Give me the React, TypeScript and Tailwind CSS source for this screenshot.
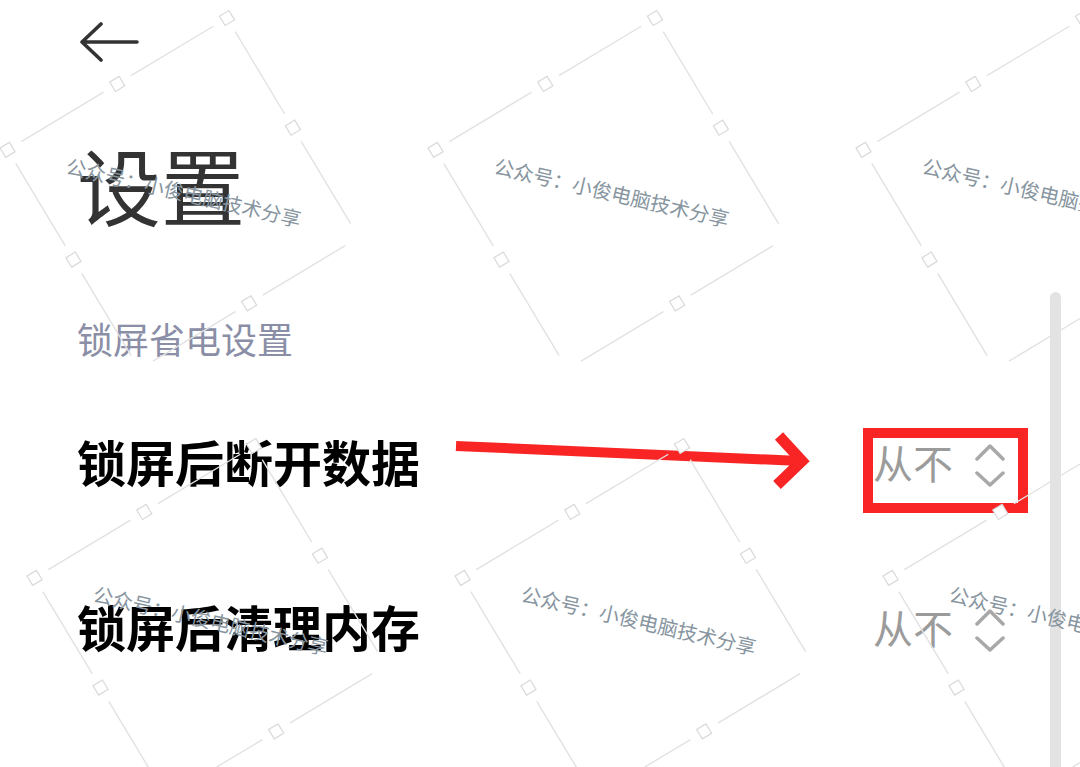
import React from 'react';

// Diagonal watermark tile: a tilted square frame with small marker boxes,
// plus the account line written across it.
const SIDE = 256;
const ANGLE = 31;
const RAD = (ANGLE * Math.PI) / 180;
const TOP = { x: 227, y: 18 };
const GAP = 16;

const alongLeft = { x: -Math.cos(RAD), y: Math.sin(RAD) };
const alongRight = { x: Math.sin(RAD), y: Math.cos(RAD) };

const pt = (base: { x: number; y: number }, dir: { x: number; y: number }, d: number) => ({
  x: base.x + dir.x * d,
  y: base.y + dir.y * d,
});

const corner = {
  top: TOP,
  left: pt(TOP, alongLeft, SIDE),
  right: pt(TOP, alongRight, SIDE),
};
const bottom = pt(corner.left, alongRight, SIDE);

const edges = [
  [corner.top, corner.left],
  [corner.top, corner.right],
  [corner.left, bottom],
  [corner.right, bottom],
];

const markers = [
  corner.top,
  corner.left,
  pt(corner.top, alongLeft, SIDE / 2),
  pt(corner.top, alongRight, SIDE / 2),
  pt(corner.left, alongRight, SIDE / 2),
  pt(corner.right, alongLeft, SIDE / 2),
];

const half = SIDE / 2;
const dash = `0 ${GAP} ${half - 2 * GAP} ${2 * GAP} ${half - 2 * GAP} ${GAP}`;

const tiles: { x: number; y: number }[] = [];
for (let r = 0; r < 2; r++) {
  for (let c = 0; c < 3; c++) {
    tiles.push({ x: c * 428 + r * 27, y: r * 428 });
  }
}

function Watermark() {
  return (
    <svg className="pointer-events-none absolute left-0 top-0" width={1080} height={767} viewBox="0 0 1080 767">
      {tiles.map((t, i) => (
        <g key={i} transform={`translate(${t.x} ${t.y})`}>
          {edges.map(([a, b], j) => (
            <line
              key={j}
              x1={a.x}
              y1={a.y}
              x2={b.x}
              y2={b.y}
              stroke="#e2e2e2"
              strokeWidth={1.4}
              strokeDasharray={dash}
            />
          ))}
          {markers.map((m, j) => (
            <rect
              key={j}
              x={m.x - 5.5}
              y={m.y - 5.5}
              width={11}
              height={11}
              fill="#ffffff"
              stroke="#d9d9d9"
              strokeWidth={1.2}
              transform={`rotate(${-ANGLE} ${m.x} ${m.y})`}
            />
          ))}
          <text
            transform="translate(67 165) rotate(13)"
            x={0}
            y={0}
            dominantBaseline="central"
            fontSize={20}
            fill="#8795a0"
            fontFamily="'Noto Sans CJK SC', sans-serif"
          >
            公众号：小俊电脑技术分享
          </text>
        </g>
      ))}
    </svg>
  );
}

function UpDown() {
  return (
    <svg className="translate-y-[4px]" width={30} height={44} viewBox="0 0 30 44" fill="none" stroke="#a8a8a8" strokeWidth={3.5} strokeLinecap="round" strokeLinejoin="round">
      <polyline points="2 16 15 3 28 16" />
      <polyline points="2 30 15 42 28 30" />
    </svg>
  );
}

function SettingRow({ label, value }: { label: string; value: string }) {
  return (
    <div className="flex h-[165px] items-center justify-between pr-[75px]">
      <span className="text-[49px] leading-[56px] font-bold text-black">{label}</span>
      <div className="flex items-center gap-[22px]">
        <span className="translate-y-[1px] text-[40px] leading-[48px] text-[#9b9b9b]">{value}</span>
        <UpDown />
      </div>
    </div>
  );
}

export default function App() {
  return (
    <div className="relative h-[767px] w-[1080px] overflow-hidden bg-white font-['Noto_Sans_CJK_SC','Noto_Sans',sans-serif]">
      <div className="pl-[77px]">
        <div className="h-[100px] pt-[22px] pl-[3px]">
          <svg width={60} height={40} viewBox="0 0 60 40" fill="none" stroke="#333333" strokeWidth={3.6} strokeLinecap="round" strokeLinejoin="round">
            <path d="M2 20H57M21 2L2 20L21 38" />
          </svg>
        </div>
        <h1 className="mt-[42px] text-[84px] leading-[84px] font-normal text-[#333333]">设置</h1>
        <div className="mt-[92px] text-[36px] leading-[40px] text-[#8a8ea6]">锁屏省电设置</div>
        <div className="mt-[20px]">
          <SettingRow label="锁屏后断开数据" value="从不" />
          <SettingRow label="锁屏后清理内存" value="从不" />
        </div>
      </div>

      {/* scroll indicator */}
      <div className="absolute left-[1050px] top-[292px] bottom-0 w-[11px] rounded-t-full bg-[#e3e3e3]" />

      {/* red annotation */}
      <svg className="absolute left-[440px] top-[420px]" width={380} height={80} viewBox="0 0 380 80" fill="none" stroke="#f92424">
        <line x1={16} y1={26} x2={360} y2={41} strokeWidth={10} />
        <polyline points="339 16 362 41 337 65" strokeWidth={11} strokeLinejoin="miter" />
      </svg>
      <div className="absolute left-[863px] top-[428px] h-[85px] w-[165px] border-[10px] border-[#f92424]" />

      <Watermark />
    </div>
  );
}
